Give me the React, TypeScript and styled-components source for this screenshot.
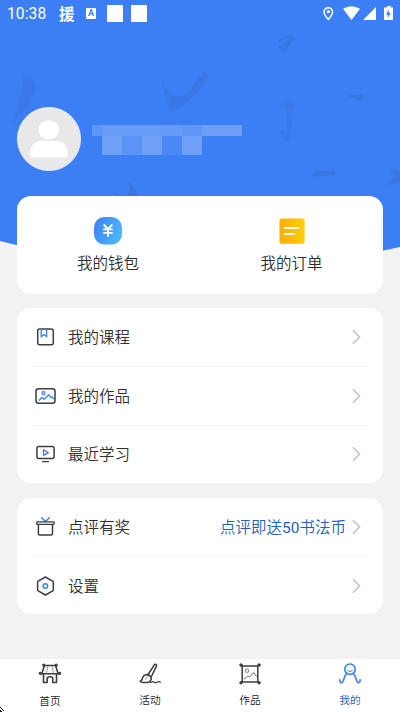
import React from 'react';
import styled, { createGlobalStyle } from 'styled-components';

const GlobalStyle = createGlobalStyle`
  * { box-sizing: border-box; }
  body {
    margin: 0;
    background: #f2f2f2;
    color: #303030;
    font-family: Roboto, "Noto Sans CJK SC", sans-serif;
    font-weight: 350;
  }
`;

const Page = styled.div`
  position: relative;
  display: flex;
  flex-direction: column;
  height: 712px;
  overflow: hidden;
`;

const Hero = styled.header`
  position: relative;
  height: 290px;
  flex: none;
  background: #3c7ff5;
  clip-path: polygon(0 0, 100% 0, 100% 247px, 50% 290px, 0 241px);
`;

const Strokes = styled.svg`
  position: absolute;
  inset: 0;
`;

const StatusBar = styled.div`
  position: relative;
  display: flex;
  align-items: center;
  height: 27px;
  padding: 0 7px;
  color: #fff;
`;

const Clock = styled.span`
  width: 52px;
  padding-top: 2px;
  font: 400 15.6px/27px Roboto, sans-serif;
  letter-spacing: 0.1px;
`;

const Notice = styled.span`
  width: 27px;
  padding-top: 3px;
  font-size: 15.5px;
  line-height: 25px;
  font-weight: 700;
`;

const LetterBadge = styled.span`
  width: 10px;
  height: 11px;
  margin-right: 11px;
  border-radius: 1px;
  background: #fff;
  color: #3c7ff5;
  font: 700 9px/11px Roboto, sans-serif;
  text-align: center;
`;

const Square = styled.span`
  width: 16px;
  height: 17px;
  margin-right: 8px;
  border-radius: 1px;
  background: #fff;
`;

const StatusIcons = styled.svg`
  margin-left: auto;
`;

const Profile = styled.div`
  position: relative;
  display: flex;
  align-items: flex-start;
  gap: 11px;
  padding: 80px 17px 0;
`;

const Mosaic = styled.div`
  display: flex;
  flex-direction: column;
  margin-top: 18px;
`;

const MosaicRow = styled.div<{ $height: number; $indent?: number }>`
  display: flex;
  height: ${(p) => p.$height}px;
  margin-left: ${(p) => p.$indent ?? 0}px;
`;

const Cell = styled.span<{ $alpha: number; $width?: number }>`
  width: ${(p) => p.$width ?? 20}px;
  background: rgba(255, 255, 255, ${(p) => p.$alpha});
`;

const Summary = styled.section`
  position: relative;
  display: grid;
  flex: none;
  grid-template-columns: 1fr 1fr;
  height: 98px;
  margin: -94px 17px 0;
  border-radius: 14px;
  background: #fff;
`;

const SummaryItem = styled.div<{ $inset?: number }>`
  display: flex;
  flex-direction: column;
  align-items: center;
  padding: 21px ${(p) => p.$inset ?? 0}px 0 0;
  font-size: 15.5px;
  line-height: 24px;
  gap: 7px;
`;

const Card = styled.section<{ $gap: number }>`
  flex: none;
  margin: ${(p) => p.$gap}px 17px 0;
  padding: 0 16px;
  border-radius: 14px;
  background: #fff;
`;

const Row = styled.div`
  display: flex;
  align-items: center;
  height: 58.3px;
  font-size: 15.5px;
  line-height: 24px;

  & + & {
    border-top: 1px solid #f3f3f3;
  }
`;

const RowLabel = styled.span`
  margin-left: 11px;
  padding-top: 2px;
`;

const Reward = styled.span`
  margin-left: auto;
  margin-right: 5px;
  padding-top: 2px;
  color: #2461b8;
`;

const Amount = styled.span`
  font-weight: 400;
`;

const Arrow = styled.svg`
  flex: none;
  margin-right: 6px;

  ${RowLabel} + & {
    margin-left: auto;
  }
`;

const TabBar = styled.nav`
  display: grid;
  grid-template-columns: repeat(4, 1fr);
  height: 53px;
  margin-top: auto;
  background: #fff;
`;

const Tab = styled.div<{ $active?: boolean; $drop?: number }>`
  display: flex;
  flex-direction: column;
  align-items: center;
  padding-top: 4px;
  gap: ${(p) => 6 + (p.$drop ?? 0)}px;
  color: ${(p) => (p.$active ? '#2461b8' : '#222')};
  font-size: 10.7px;
  line-height: 16px;
`;

const Corner = styled.svg`
  position: absolute;
  left: 0;
  bottom: 0;
`;

const DARK = '#3b3d42';
const BLUE = '#3c7ff5';

const Icon = ({ children }: { children: React.ReactNode }) => (
  <svg width="24" height="24" viewBox="0 0 24 24" fill="none" stroke={DARK} strokeWidth="1.5" strokeLinejoin="round" strokeLinecap="round">
    {children}
  </svg>
);

const CourseIcon = () => (
  <Icon>
    <rect x="4.7" y="4" width="15.6" height="15.8" rx="2" />
    <path d="M8.2 4v7.6l2.7-2 2.7 2V4" stroke={BLUE} strokeWidth="1.3" strokeLinejoin="miter" />
  </Icon>
);

const WorksIcon = () => (
  <Icon>
    <rect x="3" y="4.8" width="19" height="14.4" rx="2.5" />
    <circle cx="10.5" cy="9.2" r="1.5" stroke={BLUE} strokeWidth="1.2" />
    <path d="M6.200 16.300 9 13.500l2 1.700 4.800-4.500 2.200 3 1-.8 1.700 2" stroke={BLUE} strokeWidth="1.3" />
  </Icon>
);

const StudyIcon = () => (
  <Icon>
    <rect x="3.9" y="4.6" width="17.2" height="12" rx="2" />
    <path d="M10.5 7.8v5.6l4.8-2.8z" stroke={BLUE} strokeWidth="1.3" />
    <path d="M9.6 19.7h5.9" strokeWidth="1.3" />
  </Icon>
);

const GiftIcon = () => (
  <Icon>
    <path d="m8.6 2.7 3.9 3.7 3.9-3.7" stroke={BLUE} strokeWidth="1.4" />
    <rect x="3.7" y="6.9" width="17.4" height="2.4" rx=".5" strokeWidth="1.3" />
    <path d="M5.4 9.5v9q0 1.5 1.5 1.5H18q1.5 0 1.5-1.5v-9" />
  </Icon>
);

const SettingsIcon = () => (
  <Icon>
    <path d="m12.4 3 7.3 4.1q.6.4.6 1v7.8q0 .6-.6 1L12.4 21l-7.2-4.1q-.6-.4-.6-1V8.100q0-.6.6-1z" />
    <circle cx="12.4" cy="12" r="2.3" stroke={BLUE} strokeWidth="1.4" />
  </Icon>
);

const Chevron = () => (
  <Arrow width="10" height="16" viewBox="0 0 10 16" fill="none" stroke="#c4c4c4" strokeWidth="1.6">
    <path d="m2 1.300 6.500 6.700L2 14.700" />
  </Arrow>
);

const TabIcon = ({ color = DARK, children }: { color?: string; children: React.ReactNode }) => (
  <svg width="24" height="24" viewBox="0 0 24 24" fill="none" stroke={color} strokeWidth="1.6" strokeLinejoin="round" strokeLinecap="round">
    {children}
  </svg>
);

const HomeIcon = () => (
  <TabIcon>
    <path d="M6.500 2.500h11M6.300 3 4 10.200M17.700 3 20 10.200M3 10.700h18M5.500 11v8.500h3.700v-4q0-1.800 2.800-1.800t2.800 1.800v4h3.700V11" />
    <path d="M9.800 3.500 8.500 10M14.200 3.500l1.300 6.500" stroke="#999" strokeWidth="1" />
    <g strokeWidth="1.300">
      <circle cx="5.700" cy="2.200" r="1" />
      <circle cx="18.300" cy="2.200" r="1" />
      <circle cx="2.300" cy="10.300" r="1" />
      <circle cx="21.700" cy="10.300" r="1" />
    </g>
  </TabIcon>
);

const BrushIcon = () => (
  <TabIcon>
    <path d="M10 11.800 16.300 1.900c.8-1.100 2.700-.3 2.200 1.100L13.700 13" />
    <path d="M4.700 14.500c1.200-3.300 5-3.500 7.300-1.700 2.600 2.200.9 6.200-2.500 6.700H5.500c-1.800 0-2.400-.4-3.300-1.400 2 .2 1.700-1.500 2.500-3.600z" />
    <path d="M8.800 12.500c.8 1.700-.2 3-1.500 4" stroke="#999" strokeWidth="1" />
    <path d="M12.200 19.200c1.600.6 2.300-1.300 3.600-.3s2.400 1.100 3.600.2 1.800-.3 3 0" strokeWidth="1.300" />
  </TabIcon>
);

const ScrollIcon = () => (
  <TabIcon>
    <path d="M3.500 3h17M3.500 19h17M4.200 3v16M19.800 3v16" strokeWidth="1.500" />
    <g fill={DARK} strokeWidth=".8">
      <circle cx="3" cy="2" r="1.300" />
      <circle cx="21" cy="2" r="1.300" />
      <circle cx="3" cy="19.800" r="1.300" />
      <circle cx="21" cy="19.800" r="1.300" />
    </g>
    <g stroke="#929292" strokeWidth="1.100">
      <circle cx="9" cy="7.700" r="1.700" />
      <path d="m6.300 15.800 3.500-2.700 1.800.8 4-4.300 2.800 3.600" />
    </g>
  </TabIcon>
);

const MineIcon = () => (
  <TabIcon color={BLUE}>
    <circle cx="12" cy="6.200" r="5.200" strokeWidth="1.600" />
    <path d="M9.700 7.600q2.300 2.300 4.600 0" strokeWidth="1" />
    <path d="M8.500 10.900C5.600 12.700 6.300 19.700 3.600 19.700c-1.300 0-1.800-1.100-1.700-2.800M15.500 10.900c2.900 1.800 2.200 8.800 4.900 8.800 1.300 0 1.800-1.100 1.700-2.800" strokeWidth="1.600" />
  </TabIcon>
);

const Avatar = () => (
  <svg width="64" height="64" viewBox="0 0 64 64">
    <circle cx="32" cy="32" r="31.600" fill="#e8e8e8" stroke="#f3f3f3" strokeWidth=".8" />
    <ellipse cx="31.700" cy="22.700" rx="10.500" ry="9.500" fill="#fff" />
    <path d="M12.700 46.500C12.700 39 18 33.800 25 33.800h13.500C45.500 33.800 51 39 51 46.500q0 4-5 4H17.500q-4.800 0-4.800-4z" fill="#fff" />
  </svg>
);

const WalletIcon = () => (
  <svg width="28" height="28" viewBox="0 0 28 28">
    <defs>
      <linearGradient id="wallet" x1="0" y1="0" x2="1" y2=".4">
        <stop offset="0" stopColor="#3c80fb" />
        <stop offset="1" stopColor="#4bb3fe" />
      </linearGradient>
    </defs>
    <rect width="28" height="27.500" rx="10.500" fill="url(#wallet)" />
    <path d="m9.600 7.500 4.400 4.700 4.400-4.700M14 12.500v7.300M9.200 12.400h9.600M9.200 15.900h9.600" stroke="#fff" strokeWidth="1.900" fill="none" />
  </svg>
);

const OrderIcon = () => (
  <svg width="28" height="28" viewBox="0 0 28 28">
    <defs>
      <linearGradient id="order">
        <stop offset="0" stopColor="#ffae07" />
        <stop offset="1" stopColor="#ffce05" />
      </linearGradient>
    </defs>
    <rect x="1" y="1" width="26" height="26" rx="3" fill="#ffe6a0" />
    <rect x="1.700" y="1.700" width="24.600" height="25" rx="2.500" fill="url(#order)" />
    <path d="M6 11h15M6 17h11" stroke="#fff" strokeWidth="2" />
  </svg>
);

const Calligraphy = () => (
  <Strokes width="400" height="290" viewBox="0 0 400 290" fill="#3974df">
    <path d="M22 77q8-1 12 4 4 5 0 14l-8 15-8 6-5 8q0-9 5-20 5-13 4-27z" opacity=".5" />
    <path d="M160 80l5 7q5 8 11 9 7 1 14-6l14-18 5 4q-8 14-17 22-11 10-19 13l-5-2 1-8q-5-7-9-21z" opacity=".65" />
    <path d="M278 43q-1-4 12-8l5 3-4 6q-5 7-10 7l-3-5q11-5 10-9z" opacity=".8" />
    <path d="M283 102q5-2 13 2l-2 3-2 3-1 28-2 4-4-1-7-13 8 4V108l-3-3z" opacity=".45" />
    <path d="M347 95h10l5-2 2 7h-6l-5-1 4-2-9 1z" opacity=".8" />
    <path d="M313 174l5-3h17v4l-17 1-4 1z" opacity=".9" />
    <path d="M390 167l10 4v12q-8-1-13 4l7-11z" opacity=".8" />
    <path d="M128 182q9 4 9 13l-5 7q-11 4-18-11 9 8 13 5 5-5 1-14z" opacity=".85" />
  </Strokes>
);

const App = () => (
  <Page>
    <GlobalStyle />
    <Hero>
      <Calligraphy />
      <StatusBar>
        <Clock>10:38</Clock>
        <Notice>援</Notice>
        <LetterBadge>A</LetterBadge>
        <Square />
        <Square />
        <StatusIcons width="71" height="17" viewBox="0 0 71 17" fill="#fff">
          <path fillRule="evenodd" d="M6.300 2C3.400 2 1.300 4.200 1.300 7c0 3.600 5 8.500 5 8.500s5-4.900 5-8.500c0-2.800-2.100-5-5-5zm0 1.500c2 0 3.500 1.500 3.500 3.500s-1.700 4.200-3.500 6.200C4.500 11.200 2.800 9 2.800 7s1.500-3.500 3.500-3.500z" />
          <circle cx="6.300" cy="6.700" r="1.600" />
          <path d="M21 3.800q8.500-5.200 17 0L29.500 15zM41 15 54 2v13zM62 2.500h3V1h4v1.500h2V15h-9z" />
          <path d="m66.800 4.500-3 5h2v3.500l3-5h-2z" fill={BLUE} />
        </StatusIcons>
      </StatusBar>
      <Profile>
        <Avatar />
        <Mosaic>
          <MosaicRow $height={11}>
            <Cell $width={10} $alpha={0.18} />
            <Cell $width={60} $alpha={0.23} />
            <Cell $alpha={0.22} />
            <Cell $alpha={0.19} />
            <Cell $width={40} $alpha={0.25} />
          </MosaicRow>
          <MosaicRow $height={19} $indent={10}>
            <Cell $alpha={0.26} />
            <Cell $alpha={0.17} />
            <Cell $alpha={0.26} />
            <Cell $alpha={0.07} />
            <Cell $alpha={0.26} />
          </MosaicRow>
        </Mosaic>
      </Profile>
    </Hero>
    <Summary>
      <SummaryItem $inset={1}>
        <WalletIcon />
        我的钱包
      </SummaryItem>
      <SummaryItem>
        <OrderIcon />
        我的订单
      </SummaryItem>
    </Summary>
    <Card $gap={14}>
      <Row><CourseIcon /><RowLabel>我的课程</RowLabel><Chevron /></Row>
      <Row><WorksIcon /><RowLabel>我的作品</RowLabel><Chevron /></Row>
      <Row><StudyIcon /><RowLabel>最近学习</RowLabel><Chevron /></Row>
    </Card>
    <Card $gap={15}>
      <Row><GiftIcon /><RowLabel>点评有奖</RowLabel><Reward>点评即送<Amount>50</Amount>书法币</Reward><Chevron /></Row>
      <Row><SettingsIcon /><RowLabel>设置</RowLabel><Chevron /></Row>
    </Card>
    <TabBar>
      <Tab $drop={1}><HomeIcon />首页</Tab>
      <Tab><BrushIcon />活动</Tab>
      <Tab><ScrollIcon />作品</Tab>
      <Tab $active><MineIcon />我的</Tab>
    </TabBar>
    <Corner width="5" height="5" viewBox="0 0 5 5" fill="#111">
      <path d="M0 0h1v1H0zM1 1h1v1H1zM2 2h1v1H2zM3 3h1v1H3zM0 3h1v1h1v1H0z" />
    </Corner>
  </Page>
);

export default App;
